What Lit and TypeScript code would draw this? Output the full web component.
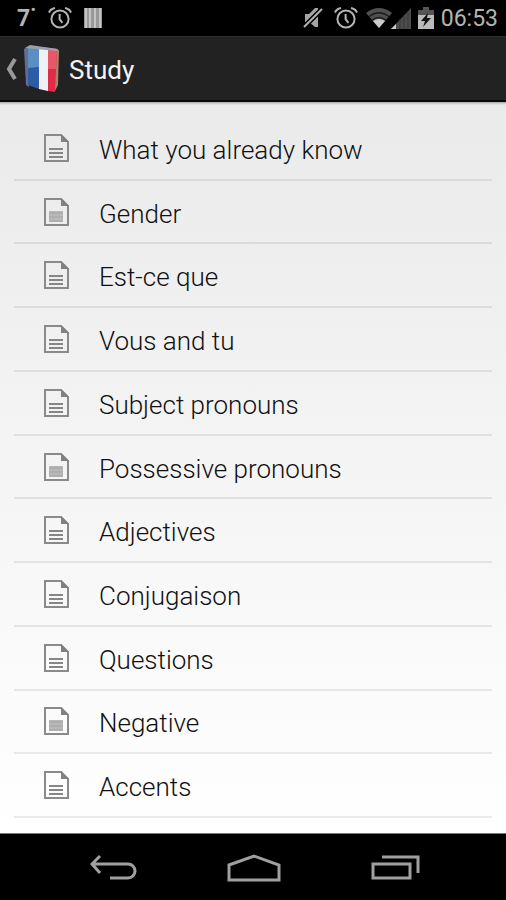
import { LitElement, html, svg, css } from "lit";
import { customElement, property } from "lit/decorators.js";

interface Lesson {
  title: string;
  shaded?: boolean;
}

const LESSONS: Lesson[] = [
  { title: "What you already know" },
  { title: "Gender", shaded: true },
  { title: "Est-ce que" },
  { title: "Vous and tu" },
  { title: "Subject pronouns" },
  { title: "Possessive pronouns", shaded: true },
  { title: "Adjectives" },
  { title: "Conjugaison" },
  { title: "Questions" },
  { title: "Negative", shaded: true },
  { title: "Accents" },
];

const alarmIcon = html`<svg width="24" height="24" viewBox="0 0 24 24" fill="none" stroke="#b4b4b4" aria-hidden="true">
  <circle cx="12" cy="13" r="8.6" stroke-width="2" />
  <path d="M11.6 8v5.2l2.8 3.6" stroke-width="2" />
  <path d="M1 6.600Q2.400 3 7 2M23 6.600Q21.600 3 17 2" stroke-width="2" />
</svg>`;

@customElement("status-bar")
export class StatusBar extends LitElement {
  static styles = css`
    :host {
      display: flex;
      align-items: center;
      justify-content: space-between;
      flex: none;
      height: 36px;
      padding: 0 8px 0 17px;
      background: #000;
      color: #b4b4b4;
      font-size: 23px;
      line-height: 34px;
    }
    svg {
      display: block;
      flex: none;
    }
    .left,
    .right {
      display: flex;
      align-items: center;
    }
    .left {
      gap: 12px;
    }
    .right {
      gap: 7px;
    }
    .temp {
      padding-top: 2px;
      font-weight: 700;
    }
    time {
      padding-top: 2px;
    }
  `;

  render() {
    return html`
      <div class="left">
        <span class="temp">7˙</span>
        ${alarmIcon}
        <svg width="18" height="20" viewBox="0 0 18 20" aria-hidden="true">
          <rect width="18" height="20" fill="#999" />
          <path d="M2 0v20M6 0v20M11 0v20M16 0v20" stroke="#c4c4c4" stroke-width="2" />
        </svg>
      </div>
      <div class="right">
        <svg width="24" height="22" viewBox="0 0 24 22" aria-hidden="true">
          <path d="M2 7h4l6-6h3v19h-3l-6-5H2z" fill="#a4a4a4" />
          <path d="M1 20 19 2" stroke="#000" stroke-width="5" />
          <path d="M1 20 19 2" stroke="#b4b4b4" stroke-width="2" />
        </svg>
        ${alarmIcon}
        <svg width="46" height="24" viewBox="0 0 46 24" aria-hidden="true">
          <path d="M1 7Q14-3 27 7L14 22z" fill="#505050" />
          <path d="M4 10.500Q14 3 24 10.500M7 14Q14 9 21 14" fill="none" stroke="#1c1c1c" stroke-width="1.4" />
          <path d="M8 15Q14 11 20 15L14 22z" fill="#ccc" />
          <path d="M26 23 46 2V23z" fill="#4c4c4c" />
          <path d="M26 23l5-5v5z" fill="#ccc" />
          <path d="M35 13v10M39 9v14M43 6v17" stroke="#383838" />
        </svg>
        <svg width="16" height="22" viewBox="0 0 16 22" aria-hidden="true">
          <path d="M5 0h6v3h5v5H0V3h5z" fill="#555" />
          <path d="M0 8h16v14H0z" fill="#bbb" />
          <path d="M10 6 3 14h4l-2 6 8-9H9z" fill="#111" />
        </svg>
        <time>06:53</time>
      </div>
    `;
  }
}

@customElement("action-bar")
export class ActionBar extends LitElement {
  @property() heading = "";

  static styles = css`
    :host {
      display: flex;
      flex: none;
      height: 66px;
      box-sizing: border-box;
      padding-left: 6px;
      background: #222;
      border-top: 1px solid #303030;
      border-bottom: 2px solid #080808;
      color: #f3f3f3;
    }
    .up {
      display: flex;
      align-items: center;
      gap: 6px;
      padding: 0;
      border: 0;
      background: none;
      color: inherit;
      cursor: pointer;
    }
    svg {
      display: block;
    }
    h1 {
      margin: 0 0 0 9px;
      padding-top: 2px;
      align-self: center;
      font-size: 26px;
      font-weight: 400;
      line-height: 32px;
    }
  `;

  render() {
    return html`
      <button class="up" aria-label="Navigate up">
        <svg width="12" height="24" viewBox="0 0 12 24" aria-hidden="true">
          <path d="M9 2 3 12l6 10" fill="none" stroke="#999" stroke-width="4" />
        </svg>
        <svg width="36" height="48" viewBox="0 0 36 48" aria-hidden="true">
          <path d="M2 3 7 1l28 4-1 35-3 6z" fill="#a98468" />
          <path d="M0 4 5 1v41l-3-2z" fill="#666b96" />
          <path d="M4 2h11v42L4 40z" fill="#2f5ba4" />
          <path d="M4 2h11v20L4 23z" fill="#5a8fc4" />
          <path d="M15 2l9 1v43l-9-2z" fill="#eef1f6" />
          <path d="M24 3l9 1-2 43-7-1z" fill="#e02c46" />
          <path d="M24 3l9 1-1 20h-8z" fill="#e85668" />
          <path d="M1 3 6 0l28 4-1 2z" fill="#98a0ac" />
        </svg>
      </button>
      <h1>${this.heading}</h1>
    `;
  }
}

@customElement("lesson-row")
export class LessonRow extends LitElement {
  @property() label = "";
  @property({ type: Boolean }) shaded = false;

  static styles = css`
    :host {
      display: flex;
    }
    .row {
      display: flex;
      flex: 1;
      align-items: center;
      gap: 29px;
      padding: 0 29px;
      color: #111;
      font-size: 26px;
      font-weight: 300;
      line-height: 32px;
      text-decoration: none;
    }
    span {
      padding-top: 4px;
    }
    svg {
      display: block;
      flex: none;
    }
  `;

  render() {
    const lines = this.shaded
      ? svg`<path d="M6 14h14v11H6z" fill="#b8b8b8" /><path d="M6 16h14M6 20h14M6 24h14" stroke="#a6a6a6" />`
      : svg`<path d="M6 16h14M6 20h14M6 24h14" stroke="#868686" stroke-width="2" />`;
    return html`
      <a class="row" href="#">
        <svg width="27" height="30" viewBox="0 0 27 30" aria-hidden="true">
          <path d="M2 2h16l7 7v19H2z" fill="none" stroke="#8a8a8a" stroke-width="2" />
          <path d="M18 1v8h8z" fill="#808080" />
          ${lines}
        </svg>
        <span>${this.label}</span>
      </a>
    `;
  }
}

@customElement("nav-bar")
export class NavBar extends LitElement {
  static styles = css`
    :host {
      display: flex;
      flex: none;
      justify-content: center;
      height: 67px;
      box-sizing: border-box;
      padding: 2px 0 0 1px;
      background: #000;
      border-top: 1px solid #777;
    }
    button {
      display: flex;
      flex: 0 1 141px;
      align-items: center;
      justify-content: center;
      padding: 0;
      border: 0;
      background: none;
      cursor: pointer;
    }
    svg {
      display: block;
      fill: none;
      stroke: #a0a0a0;
      stroke-width: 3;
    }
  `;

  render() {
    return html`
      <button aria-label="Back">
        <svg width="48" height="28" viewBox="0 0 48 28">
          <path d="M11 2 3 10l8 9M3 10h36a7 7 0 0 1 0 14H21" />
        </svg>
      </button>
      <button aria-label="Home">
        <svg width="54" height="30" viewBox="0 0 54 30">
          <path d="M2 12 27 3l25 9v15H2z" />
        </svg>
      </button>
      <button aria-label="Recent apps">
        <svg width="50" height="28" viewBox="0 0 50 28">
          <path d="M3 10h37v14H3zM12 3h36v16" />
        </svg>
      </button>
    `;
  }
}

@customElement("app-root")
export class AppRoot extends LitElement {
  static styles = css`
    :host {
      display: flex;
      flex-direction: column;
      min-height: 100vh;
      background: #fff;
      font-family: Roboto, sans-serif;
    }
    main {
      display: flex;
      flex: 1;
      padding: 15px 14px;
      background:
        linear-gradient(#aaa, transparent) top / 100% 3px no-repeat,
        linear-gradient(#eaeaea, #fff);
    }
    ul {
      display: flex;
      flex: 1;
      flex-direction: column;
      margin: 0;
      padding: 0;
      list-style: none;
    }
    li {
      display: grid;
      flex: 1 0 56px;
      border-bottom: 2px solid rgba(0, 0, 0, 0.08);
    }
  `;

  render() {
    return html`
      <status-bar></status-bar>
      <action-bar heading="Study"></action-bar>
      <main>
        <ul>
          ${LESSONS.map(
            (lesson) => html`<li>
              <lesson-row .label=${lesson.title} .shaded=${lesson.shaded ?? false}></lesson-row>
            </li>`,
          )}
        </ul>
      </main>
      <nav-bar></nav-bar>
    `;
  }
}
